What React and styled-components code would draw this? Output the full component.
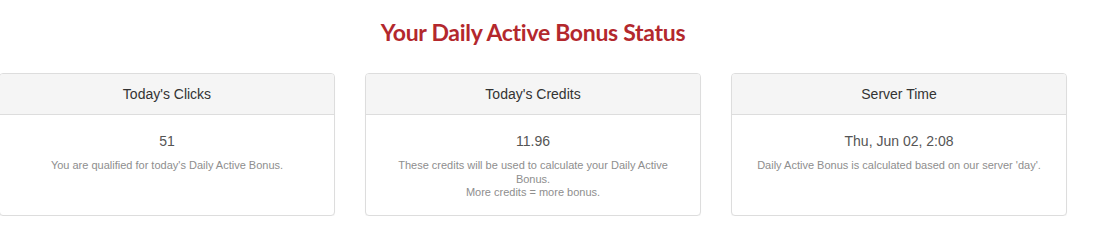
import styled, { createGlobalStyle } from 'styled-components';

const GlobalStyle = createGlobalStyle`
  body {
    margin: 0;
    background: #fff;
    font-family: "Liberation Sans", Arial, sans-serif;
  }
`;

const Page = styled.div`
  width: 1066px;
  padding-top: 17px;
`;

const Heading = styled.h2`
  margin: 0 0 26px;
  text-align: center;
  font-family: Lato, "Open Sans", sans-serif;
  font-weight: 700;
  font-size: 23px;
  line-height: 30px;
  letter-spacing: -0.3px;
  color: #b3282d;
`;

const Row = styled.div`
  display: grid;
  grid-template-columns: repeat(3, 336px);
  gap: 30px;
  margin-left: -1px;
`;

const Panel = styled.div`
  display: flex;
  flex-direction: column;
  border: 1px solid #dddddd;
  border-radius: 4px;
  background: #fff;
  box-shadow: 0 1px 1px rgba(0, 0, 0, 0.04);
`;

const PanelHeading = styled.div`
  height: 40px;
  display: flex;
  align-items: center;
  justify-content: center;
  background: #f5f5f5;
  border-bottom: 1px solid #dddddd;
  border-radius: 3px 3px 0 0;
  font-size: 14px;
  color: #333;
`;

const PanelBody = styled.div`
  flex: 1;
  padding: 16px 20px 15px;
  text-align: center;
`;

const Value = styled.div`
  font-size: 14px;
  line-height: 20px;
  color: #555;
  margin-bottom: 8px;
`;

const Note = styled.p`
  margin: 0;
  font-size: 11px;
  line-height: 13.5px;
  color: #8e8e8e;
`;

const panels = [
  {
    title: "Today's Clicks",
    value: '51',
    notes: ["You are qualified for today's Daily Active Bonus."],
  },
  {
    title: "Today's Credits",
    value: '11.96',
    notes: [
      'These credits will be used to calculate your Daily Active Bonus.',
      'More credits = more bonus.',
    ],
  },
  {
    title: 'Server Time',
    value: 'Thu, Jun 02, 2:08',
    notes: ["Daily Active Bonus is calculated based on our server 'day'."],
  },
];

export default function App() {
  return (
    <>
      <GlobalStyle />
      <Page>
        <Heading>Your Daily Active Bonus Status</Heading>
        <Row>
          {panels.map((p) => (
            <Panel key={p.title}>
              <PanelHeading>{p.title}</PanelHeading>
              <PanelBody>
                <Value>{p.value}</Value>
                {p.notes.map((n) => (
                  <Note key={n}>{n}</Note>
                ))}
              </PanelBody>
            </Panel>
          ))}
        </Row>
      </Page>
    </>
  );
}
